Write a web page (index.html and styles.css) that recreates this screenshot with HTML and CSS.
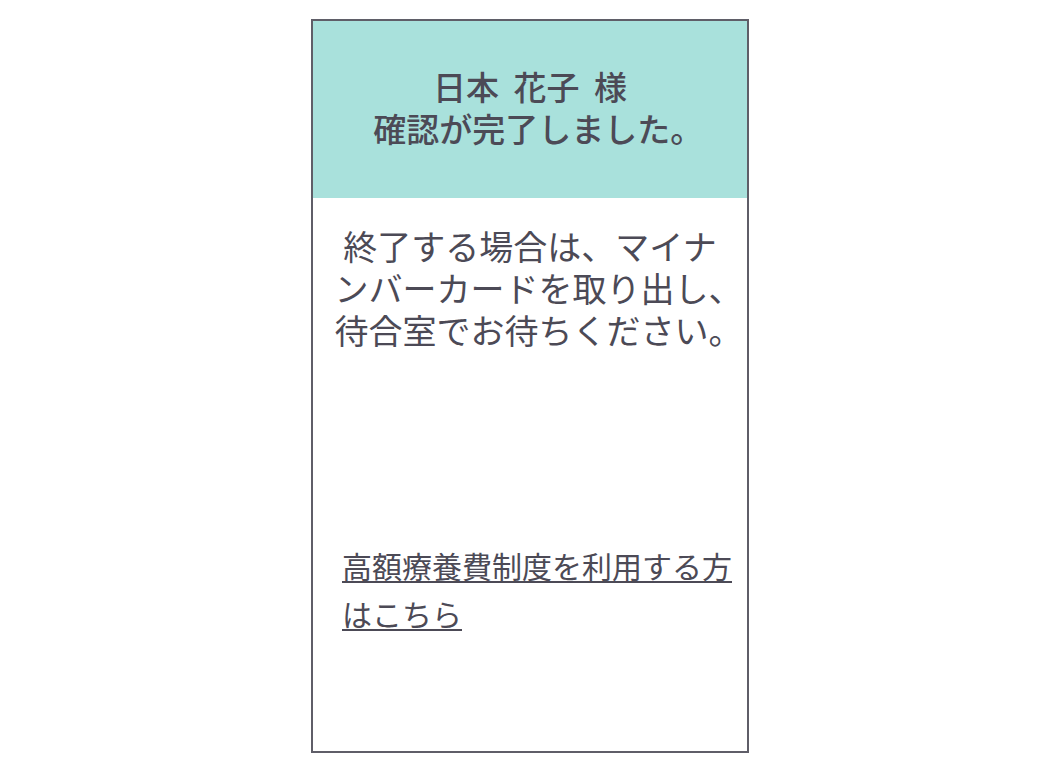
FILE: index.html
```html
<!DOCTYPE html>
<html lang="ja">
<head>
<meta charset="utf-8">
<link rel="stylesheet" href="styles.css">
</head>
<body>
<div class="card">
  <div class="header">
    <p class="header-text">日本 花子 様<br>確認が完了しました<span class="trail">。</span></p>
  </div>
  <div class="content">
    <p class="message">終了する場合は、マイナ<br>ンバーカードを取り出し<span class="trail">、</span><br>待合室でお待ちください<span class="trail">。</span></p>
    <a class="link" href="#">高額療養費制度を利用する方<br>はこちら</a>
  </div>
</div>
</body>
</html>
```
FILE: styles.css
```css
html, body {
  margin: 0;
  padding: 0;
  background: #ffffff;
}
body {
  font-family: "Noto Sans CJK JP", "Noto Sans", sans-serif;
  color: #4c4a56;
}
.card {
  width: 434px;
  height: 730px;
  margin: 19px auto 0;
  border: 2px solid #5f5e68;
  display: flex;
  flex-direction: column;
}
.header {
  height: 177px;
  background: #a9e1dc;
  display: flex;
  align-items: center;
  justify-content: center;
}
.header-text {
  margin: 0;
  padding-bottom: 6px;
  font-size: 33px;
  font-weight: 500;
  line-height: 42px;
  text-align: center;
  word-spacing: 7px;
  white-space: nowrap;
}
.trail {
  margin-right: -0.5em;
}
.content {
  display: flex;
  flex-direction: column;
  padding: 27px 0 0;
}
.message {
  margin: 0;
  font-size: 34px;
  line-height: 42px;
  text-align: center;
  white-space: nowrap;
}
.link {
  margin: 190px 0 0 29px;
  font-size: 30px;
  line-height: 48px;
  color: #4c4a56;
  text-decoration: underline;
  text-underline-offset: 3px;
  text-decoration-thickness: 2px;
}
```
